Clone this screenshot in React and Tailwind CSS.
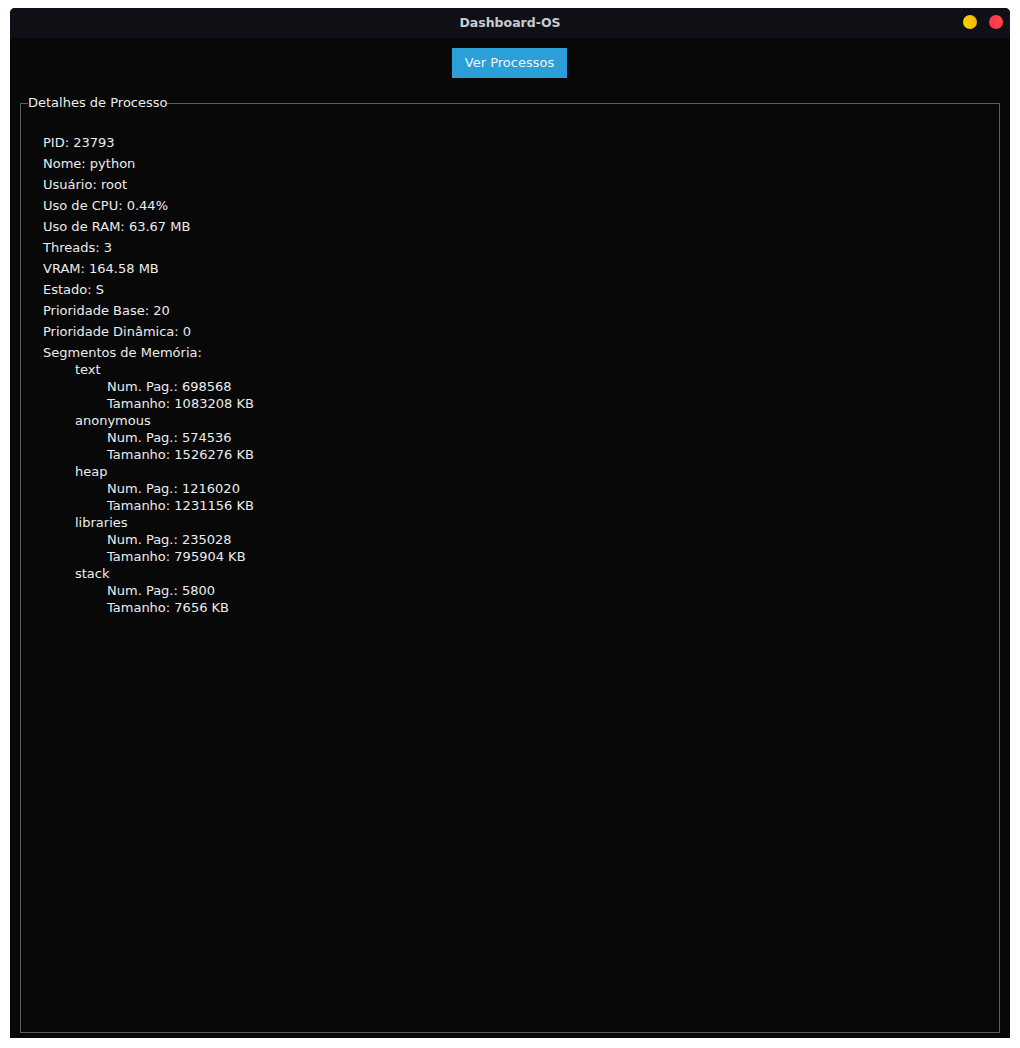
export default function App() {
  const main = [
    "PID: 23793",
    "Nome: python",
    "Usuário: root",
    "Uso de CPU: 0.44%",
    "Uso de RAM: 63.67 MB",
    "Threads: 3",
    "VRAM: 164.58 MB",
    "Estado: S",
    "Prioridade Base: 20",
    "Prioridade Dinâmica: 0",
    "Segmentos de Memória:",
  ];
  const segs = [
    ["text", "698568", "1083208"],
    ["anonymous", "574536", "1526276"],
    ["heap", "1216020", "1231156"],
    ["libraries", "235028", "795904"],
    ["stack", "5800", "7656"],
  ];
  return (
    <div className="w-[1020px] h-[1048px] bg-white pt-[8px] pl-[10px]" style={{ fontFamily: '"DejaVu Sans", sans-serif' }}>
      <div className="w-[1000px] h-[1030px] flex flex-col bg-[#080808] rounded-t-[5px] overflow-hidden">
        <div className="h-[30px] shrink-0 bg-[#0f1016] relative flex items-center justify-center">
          <span className="font-bold text-[12.5px] text-[#c7ccd4]">Dashboard-OS</span>
          <div className="absolute right-[7px] top-[7px] flex gap-[12px]">
            <div className="w-[14px] h-[14px] rounded-full bg-gradient-to-r from-[#ffd200] to-[#f4b400]"></div>
            <div className="w-[14px] h-[14px] rounded-full bg-gradient-to-r from-[#ff2f55] to-[#ff4a3a]"></div>
          </div>
        </div>
        <div className="flex-1 flex flex-col px-[10px] pb-[5px]">
          <div className="mt-[10px] flex justify-center pr-[1px]">
            <button className="w-[115px] h-[30px] bg-[#2b9fd8] text-[#f2f6fa] text-[13px]">Ver Processos</button>
          </div>
          <fieldset className="mt-[17px] flex-1 border border-[#5c5c5c] pl-[22px] pt-[21px] min-h-0">
            <legend className="-ml-[15px] p-0 text-[13px] leading-[16px] text-[#ececec]">Detalhes de Processo</legend>
            <div className="text-[13px] text-[#ececec]">
              {main.map((t) => (
                <div key={t} className="leading-[21px]">{t}</div>
              ))}
              <div className="leading-[17px] -mt-[2px]">
                {segs.map(([n, p, s]) => (
                  <div key={n}>
                    <div className="pl-[32px]">{n}</div>
                    <div className="pl-[64px]">Num. Pag.: {p}</div>
                    <div className="pl-[64px]">Tamanho: {s} KB</div>
                  </div>
                ))}
              </div>
            </div>
          </fieldset>
        </div>
      </div>
    </div>
  );
}
